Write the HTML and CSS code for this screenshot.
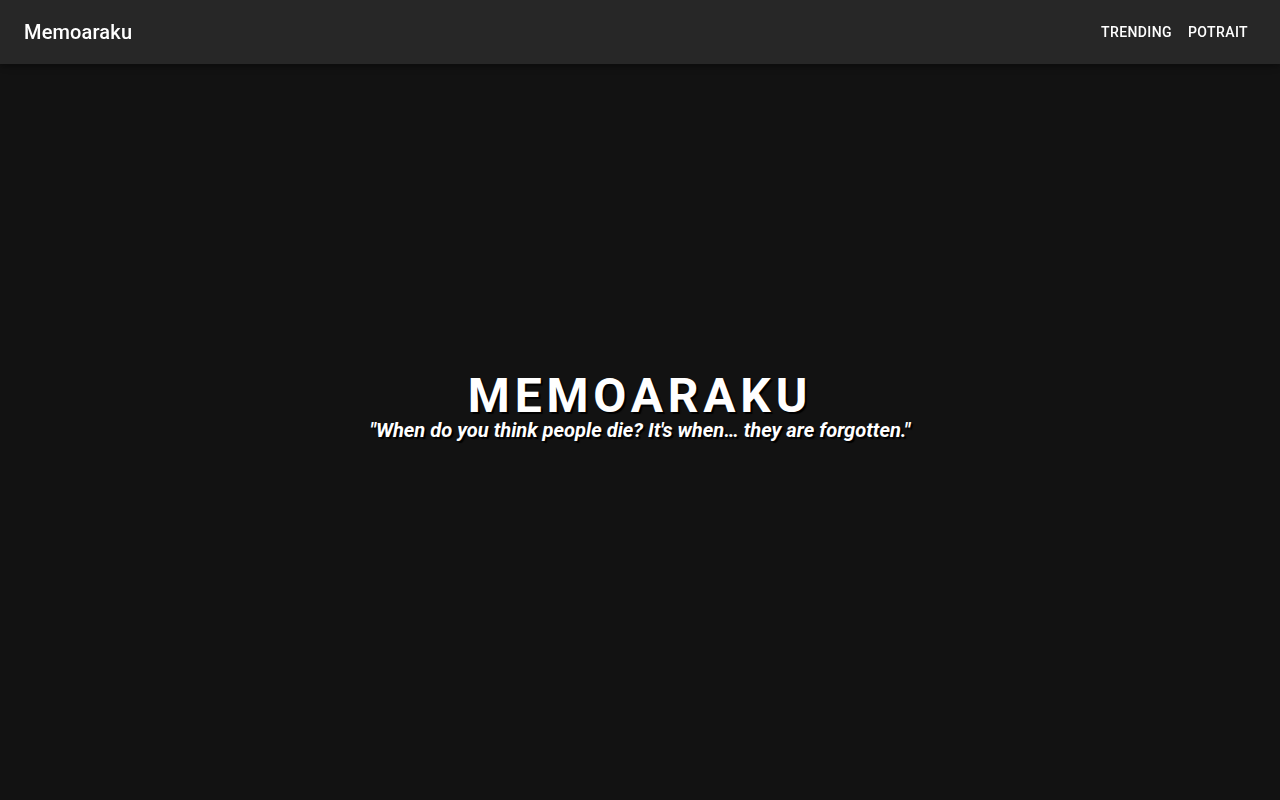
FILE: index.html
```html
<!DOCTYPE html>
<html lang="en">
<head>
<meta charset="utf-8">
<title>Memoaraku</title>
<link rel="stylesheet" href="styles.css">
</head>
<body>
<header class="appbar">
  <div class="toolbar">
    <div class="brand">Memoaraku</div>
    <nav class="nav">
      <a class="nav-btn" href="#">Trending</a>
      <a class="nav-btn" href="#">Potrait</a>
    </nav>
  </div>
</header>
<main class="hero">
  <h1 class="hero-title">MEMOARAKU</h1>
  <p class="hero-quote">"When do you think people die? It's when… they are forgotten."</p>
</main>
</body>
</html>
```

FILE: styles.css
```css
* { box-sizing: border-box; }
html, body {
  margin: 0;
  padding: 0;
  background: #121212;
  color: #fff;
  font-family: Roboto, "Liberation Sans", sans-serif;
}
.appbar {
  position: fixed;
  top: 0;
  left: 0;
  right: 0;
  background: #272727;
  box-shadow: 0 2px 4px -1px rgba(0,0,0,0.2), 0 4px 5px 0 rgba(0,0,0,0.14), 0 1px 10px 0 rgba(0,0,0,0.12);
  z-index: 10;
}
.toolbar {
  height: 64px;
  display: flex;
  align-items: center;
  justify-content: space-between;
  padding: 0 24px;
}
.brand {
  font-size: 20px;
  font-weight: 500;
  letter-spacing: 0.0075em;
  line-height: 1.6;
}
.nav { display: flex; }
.nav-btn {
  color: #fff;
  text-decoration: none;
  text-transform: uppercase;
  font-size: 14px;
  font-weight: 500;
  letter-spacing: 0.02857em;
  line-height: 1.75;
  padding: 6px 8px;
}
.hero {
  min-height: 100vh;
  display: flex;
  flex-direction: column;
  align-items: center;
  justify-content: center;
  padding-top: 12px;
}
.hero-title {
  margin: 0;
  font-size: 48px;
  font-weight: 700;
  letter-spacing: 0.1em;
  line-height: 1;
  text-shadow: 2px 2px 1px #000;
}
.hero-quote {
  margin: 0;
  font-size: 20.1px;
  font-style: italic;
  font-weight: 700;
  line-height: 1;
  text-shadow: 2px 2px 1px #000;
}
```
